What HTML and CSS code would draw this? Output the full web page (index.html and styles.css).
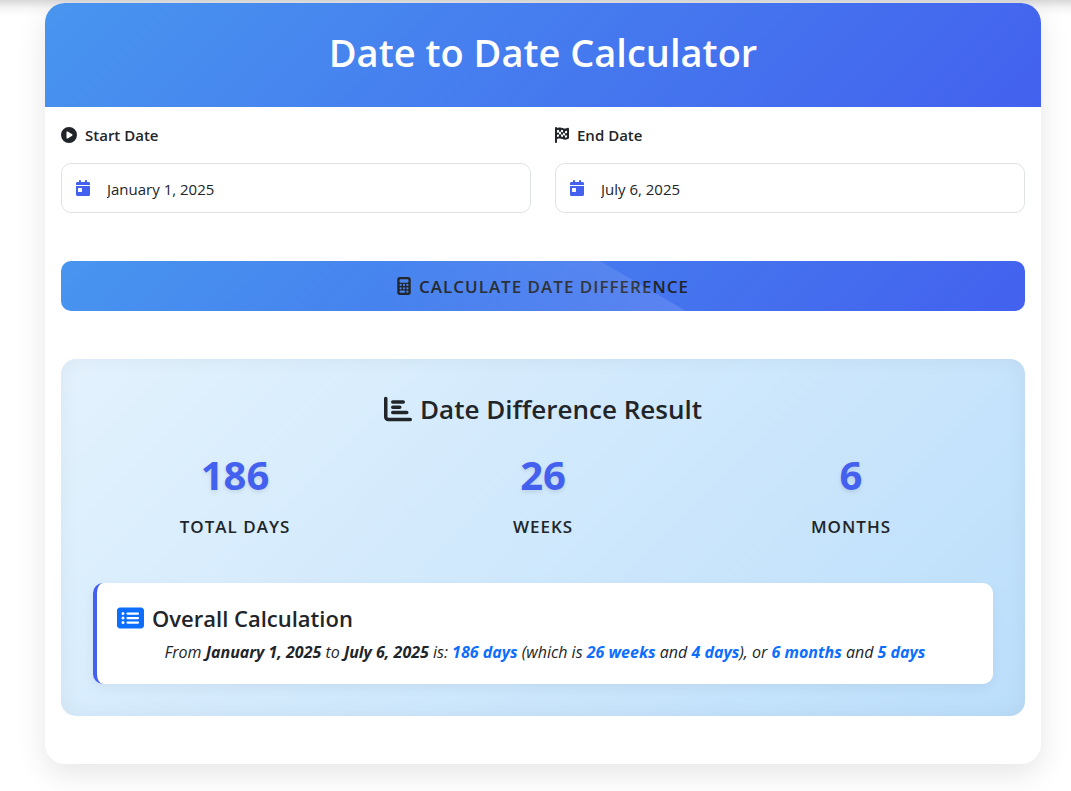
FILE: index.html
```html
<!DOCTYPE html>
<html lang="en">
<head>
<meta charset="utf-8">
<meta name="viewport" content="width=device-width, initial-scale=1">
<title>Date to Date Calculator</title>
<link rel="stylesheet" href="styles.css">
</head>
<body>
<main class="calculator">
  <header class="calculator-header">
    <h1 class="calculator-title">Date to Date Calculator</h1>
  </header>
  <form class="calculator-body">
    <div class="fields">
      <div class="field">
        <label class="field-label" for="start-date">
          <svg class="icon" viewBox="0 0 512 512" aria-hidden="true"><path d="M0 256a256 256 0 1 1 512 0A256 256 0 1 1 0 256zM188.3 147.1c-7.6 4.2-12.3 12.3-12.3 20.9V344c0 8.7 4.7 16.7 12.3 20.9s16.8 4.1 24.3-.5l144-88c7.1-4.4 11.5-12.1 11.5-20.5s-4.4-16.1-11.5-20.5l-144-88c-7.4-4.5-16.7-4.7-24.3-.5z"/></svg>
          Start Date
        </label>
        <div class="date-box">
          <svg class="icon icon-date" viewBox="0 0 448 512" aria-hidden="true"><path d="M128 0c17.700 0 32 14.300 32 32V64H288V32c0-17.700 14.300-32 32-32s32 14.300 32 32V64h48c26.500 0 48 21.500 48 48v48H0V112C0 85.500 21.500 64 48 64H96V32c0-17.700 14.300-32 32-32zM0 192H448V464c0 26.500-21.500 48-48 48H48c-26.500 0-48-21.500-48-48V192zm80 64c-8.800 0-16 7.200-16 16v96c0 8.800 7.200 16 16 16h96c8.800 0 16-7.200 16-16V272c0-8.800-7.200-16-16-16H80z"/></svg>
          <input class="date-input" id="start-date" type="text" value="January 1, 2025">
        </div>
      </div>
      <div class="field">
        <label class="field-label" for="end-date">
          <svg class="icon icon-narrow" viewBox="0 0 448 512" aria-hidden="true"><path fill-rule="evenodd" d="M32 0c18 0 32 14 32 32l51-13c43-11 89-6 129 14 45 22 97 22 142 0l10-5c24-12 52 5 52 32v288c0 14-8 26-21 31l-35 13c-49 18-104 16-151-7-39-20-85-25-127-14L64 384v96c0 18-14 32-32 32S0 498 0 480V32C0 14 14 0 32 0zM64 187l64-14v64l-64 14v67l64-16v-65c21-5 43-5 64-1v68c22 3 44 10 64 19v-67c21 10 42 17 64 19v66c22 0 44-4 64-12v-68c-21 7-43 9-64 7v-66c21 1 43-3 64-11v-68c-21 9-42 14-64 16v63c-22-2-43-10-64-20V105c-21-9-42-19-64-21v68c-21-4-43-3-64 1V84l-64 16zm128-35c22 4 43 13 64 23v71c-21-10-42-17-64-18z"/></svg>
          End Date
        </label>
        <div class="date-box">
          <svg class="icon icon-date" viewBox="0 0 448 512" aria-hidden="true"><path d="M128 0c17.700 0 32 14.300 32 32V64H288V32c0-17.700 14.300-32 32-32s32 14.300 32 32V64h48c26.500 0 48 21.500 48 48v48H0V112C0 85.500 21.500 64 48 64H96V32c0-17.700 14.300-32 32-32zM0 192H448V464c0 26.500-21.500 48-48 48H48c-26.500 0-48-21.500-48-48V192zm80 64c-8.800 0-16 7.200-16 16v96c0 8.800 7.200 16 16 16h96c8.800 0 16-7.200 16-16V272c0-8.800-7.200-16-16-16H80z"/></svg>
          <input class="date-input" id="end-date" type="text" value="July 6, 2025">
        </div>
      </div>
    </div>

    <button class="calculate" type="button">
      <svg class="icon icon-calculator" viewBox="0 0 384 512" aria-hidden="true"><path fill-rule="evenodd" d="M64 0h256c35 0 64 29 64 64v384c0 35-29 64-64 64H64c-35 0-64-29-64-64V64C0 29 29 0 64 0zm32 64c-18 0-32 14-32 32v32c0 18 14 32 32 32h192c18 0 32-14 32-32V96c0-18-14-32-32-32zM64 224a32 32 0 1 0 64 0 32 32 0 1 0-64 0zm96 0a32 32 0 1 0 64 0 32 32 0 1 0-64 0zm96 0a32 32 0 1 0 64 0 32 32 0 1 0-64 0zM64 320a32 32 0 1 0 64 0 32 32 0 1 0-64 0zm96 0a32 32 0 1 0 64 0 32 32 0 1 0-64 0zm96 0a32 32 0 1 0 64 0 32 32 0 1 0-64 0zM96 384a32 32 0 0 0 0 64h96a32 32 0 0 0 0-64zM256 416a32 32 0 1 0 64 0 32 32 0 1 0-64 0z"/></svg>
      Calculate Date Difference
    </button>

    <section class="result">
      <h2 class="result-title">
        <svg class="icon icon-chart" viewBox="0 0 512 512" aria-hidden="true"><path d="M32 32c17.700 0 32 14.300 32 32V400c0 8.800 7.200 16 16 16H480c17.700 0 32 14.300 32 32s-14.300 32-32 32H80c-44.200 0-80-35.800-80-80V64C0 46.300 14.300 32 32 32zM160 96H352a32 32 0 0 1 0 64H160a32 32 0 0 1 0-64zm0 96H288a32 32 0 0 1 0 64H160a32 32 0 0 1 0-64zm0 96H416a32 32 0 0 1 0 64H160a32 32 0 0 1 0-64z"/></svg>
        Date Difference Result
      </h2>
      <div class="stats">
        <div class="stat"><div class="stat-value">186</div><div class="stat-label">Total Days</div></div>
        <div class="stat"><div class="stat-value">26</div><div class="stat-label">Weeks</div></div>
        <div class="stat"><div class="stat-value">6</div><div class="stat-label">Months</div></div>
      </div>
      <div class="overall">
        <h3 class="overall-title">
          <svg class="icon icon-list" viewBox="0 0 576 512" aria-hidden="true"><path fill-rule="evenodd" d="M0 96C0 61 29 32 64 32H512c35 0 64 29 64 64V416c0 35-29 64-64 64H64c-35 0-64-29-64-64V96zM128 288a32 32 0 1 0 0-64 32 32 0 1 0 0 64zm32-128a32 32 0 1 0-64 0 32 32 0 1 0 64 0zM128 384a32 32 0 1 0 0-64 32 32 0 1 0 0 64zm96-248a24 24 0 0 0 0 48H448a24 24 0 0 0 0-48zm0 96a24 24 0 0 0 0 48H448a24 24 0 0 0 0-48zm0 96a24 24 0 0 0 0 48H448a24 24 0 0 0 0-48z"/></svg>
          Overall Calculation
        </h3>
        <p class="overall-text">From <strong>January 1, 2025</strong> to <strong>July 6, 2025</strong> is: <strong class="accent">186 days</strong> (which is <strong class="accent">26 weeks</strong> and <strong class="accent">4 days</strong>), or <strong class="accent">6 months</strong> and <strong class="accent">5 days</strong></p>
      </div>
    </section>
  </form>
</main>
</body>
</html>
```
FILE: styles.css
```css
* {
  box-sizing: border-box;
}

body {
  margin: 0;
  padding: 3px 30px 27px 45px;
  background: #fff linear-gradient(#d9d9d9, #f5f5f5 8px, #fff 16px) no-repeat;
  color: #212529;
  font-family: "Open Sans", "Noto Sans", sans-serif;
  font-size: 15px;
  line-height: 24px;
}

h1,
h2,
h3,
p {
  margin: 0;
}

.icon {
  flex: none;
  width: 16px;
  height: 16px;
  fill: currentColor;
}

.icon-narrow {
  width: 14px;
}

.calculator {
  overflow: hidden;
  border-radius: 20px;
  background: #fff;
  box-shadow: 0 10px 30px rgba(0, 0, 0, 0.1);
}

.calculator-header {
  padding: 25px 24px 31px;
  background: linear-gradient(135deg, #4895ef, #4361ee);
  color: #fff;
  text-align: center;
}

.calculator-title {
  font-size: 38px;
  font-weight: 600;
  line-height: 48px;
}

.calculator-body {
  padding: 16px 16px 48px;
}

.fields {
  display: grid;
  grid-template-columns: 1fr 1fr;
  gap: 24px;
}

.field-label {
  display: flex;
  align-items: center;
  gap: 8px;
  margin-bottom: 16px;
  font-size: 15px;
  font-weight: 600;
}

.date-box {
  display: flex;
  align-items: center;
  gap: 16px;
  height: 50px;
  padding: 0 13px;
  border: 1px solid #dee2e6;
  border-radius: 10px;
}

.icon-date {
  height: 16px;
  color: #4361ee;
}

.date-input {
  flex: 1;
  min-width: 0;
  padding: 1px 0 0;
  border: 0;
  outline: 0;
  background: transparent;
  color: inherit;
  font: inherit;
}

.calculate {
  position: relative;
  display: flex;
  align-items: center;
  justify-content: center;
  gap: 8px;
  width: 100%;
  height: 50px;
  margin: 48px 0;
  border: 0;
  border-radius: 10px;
  background: linear-gradient(135deg, #4895ef, #4361ee);
  color: #212529;
  font-family: inherit;
  font-size: 17px;
  font-weight: 600;
  letter-spacing: 1px;
  text-transform: uppercase;
}

.calculate::after {
  content: "";
  position: absolute;
  inset: 0;
  border-radius: 10px;
  background: linear-gradient(90deg, transparent 50%, rgba(255, 255, 255, 0.12));
  background-size: calc(50% + 143px) 100%;
  background-repeat: no-repeat;
  clip-path: polygon(0 0, calc(50% + 57px) 0, calc(50% + 143px) 100%, 0 100%);
}

.icon-calculator {
  width: 14px;
  height: 18px;
}

.result {
  padding: 32px;
  border-radius: 15px;
  background: linear-gradient(135deg, #e3f2fd, #bbdefb);
  box-shadow: inset 0 0 20px rgba(0, 0, 0, 0.05);
}

.result-title {
  display: flex;
  align-items: center;
  justify-content: center;
  gap: 8px;
  margin-bottom: 20px;
  font-size: 26px;
  font-weight: 600;
  line-height: 36px;
}

.icon-chart {
  width: 28px;
  height: 28px;
}

.stats {
  display: grid;
  grid-template-columns: repeat(3, 1fr);
  margin: 0 -12px 44px;
  text-align: center;
}

.stat-value {
  margin-bottom: 12px;
  color: #4361ee;
  font-size: 40px;
  font-weight: 700;
  line-height: 56px;
  text-shadow: 0 2px 4px rgba(0, 0, 0, 0.1);
}

.stat-label {
  font-size: 17px;
  font-weight: 600;
  letter-spacing: 1px;
  text-transform: uppercase;
}

.overall {
  padding: 20px;
  border-left: 4px solid #4361ee;
  border-radius: 10px;
  background: #fff;
  box-shadow: 0 4px 12px rgba(0, 0, 0, 0.05);
}

.overall-title {
  display: flex;
  align-items: center;
  gap: 8px;
  margin-bottom: 7px;
  font-size: 22px;
  font-weight: 600;
  line-height: 30px;
}

.icon-list {
  width: 27px;
  height: 24px;
  color: #0d6efd;
}

.overall-text {
  font-size: 16px;
  font-style: italic;
  text-align: center;
}

.accent {
  color: #0d6efd;
}
```
